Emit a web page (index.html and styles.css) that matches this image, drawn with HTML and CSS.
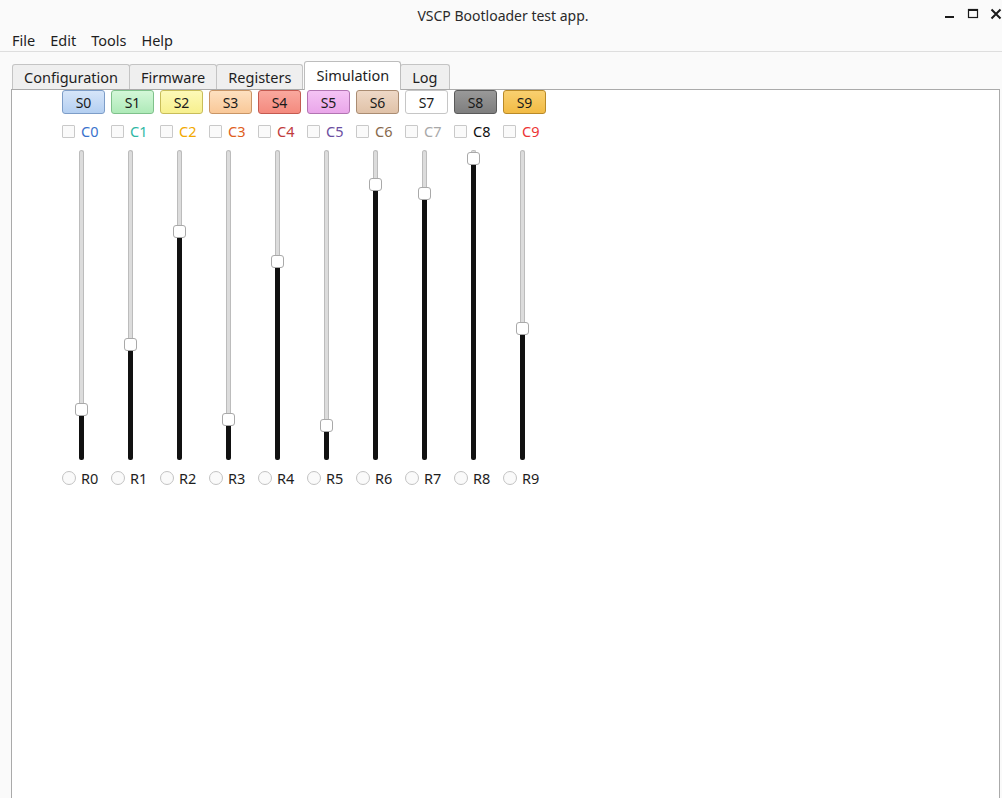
FILE: index.html
```html
<!DOCTYPE html>
<html>
<head>
<meta charset="utf-8">
<link rel="stylesheet" href="styles.css">
</head>
<body>
<div class="titlebar">
  <div class="title">VSCP Bootloader test app.</div>
  <div class="controls">
    <svg class="ctl" width="12" height="12" viewBox="0 0 12 12"><rect x="1" y="8" width="9" height="2" fill="#1a1a1a"/></svg>
    <svg class="ctl" width="12" height="12" viewBox="0 0 12 12"><rect x="1.5" y="1.5" width="9" height="8" fill="none" stroke="#1a1a1a" stroke-width="1.2"/><rect x="1" y="1" width="10" height="2" fill="#1a1a1a"/></svg>
    <svg class="ctl" width="12" height="12" viewBox="0 0 12 12"><path d="M1.5 1.5 L10.5 10.5 M10.5 1.5 L1.5 10.5" stroke="#1a1a1a" stroke-width="2"/></svg>
  </div>
</div>
<div class="menubar">
  <span class="menu">File</span>
  <span class="menu">Edit</span>
  <span class="menu">Tools</span>
  <span class="menu">Help</span>
</div>
<div class="tabs">
  <div class="tab">Configuration</div>
  <div class="tab">Firmware</div>
  <div class="tab">Registers</div>
  <div class="tab active">Simulation</div>
  <div class="tab">Log</div>
</div>
<div class="panel">
  <div class="grid">
    <div class="col">
      <div class="btn s0">S0</div>
      <label class="check"><span class="box"></span><span class="c0">C0</span></label>
      <div class="slider"><div class="rail" style="height:253px"></div><div class="knob"></div><div class="fill" style="height:44px"></div></div>
      <label class="radio"><span class="dot"></span><span>R0</span></label>
    </div>
    <div class="col">
      <div class="btn s1">S1</div>
      <label class="check"><span class="box"></span><span class="c1">C1</span></label>
      <div class="slider"><div class="rail" style="height:188px"></div><div class="knob"></div><div class="fill" style="height:109px"></div></div>
      <label class="radio"><span class="dot"></span><span>R1</span></label>
    </div>
    <div class="col">
      <div class="btn s2">S2</div>
      <label class="check"><span class="box"></span><span class="c2">C2</span></label>
      <div class="slider"><div class="rail" style="height:75px"></div><div class="knob"></div><div class="fill" style="height:222px"></div></div>
      <label class="radio"><span class="dot"></span><span>R2</span></label>
    </div>
    <div class="col">
      <div class="btn s3">S3</div>
      <label class="check"><span class="box"></span><span class="c3">C3</span></label>
      <div class="slider"><div class="rail" style="height:263px"></div><div class="knob"></div><div class="fill" style="height:34px"></div></div>
      <label class="radio"><span class="dot"></span><span>R3</span></label>
    </div>
    <div class="col">
      <div class="btn s4">S4</div>
      <label class="check"><span class="box"></span><span class="c4">C4</span></label>
      <div class="slider"><div class="rail" style="height:105px"></div><div class="knob"></div><div class="fill" style="height:192px"></div></div>
      <label class="radio"><span class="dot"></span><span>R4</span></label>
    </div>
    <div class="col">
      <div class="btn s5">S5</div>
      <label class="check"><span class="box"></span><span class="c5">C5</span></label>
      <div class="slider"><div class="rail" style="height:269px"></div><div class="knob"></div><div class="fill" style="height:28px"></div></div>
      <label class="radio"><span class="dot"></span><span>R5</span></label>
    </div>
    <div class="col">
      <div class="btn s6">S6</div>
      <label class="check"><span class="box"></span><span class="c6">C6</span></label>
      <div class="slider"><div class="rail" style="height:28px"></div><div class="knob"></div><div class="fill" style="height:269px"></div></div>
      <label class="radio"><span class="dot"></span><span>R6</span></label>
    </div>
    <div class="col">
      <div class="btn s7">S7</div>
      <label class="check"><span class="box"></span><span class="c7">C7</span></label>
      <div class="slider"><div class="rail" style="height:37px"></div><div class="knob"></div><div class="fill" style="height:260px"></div></div>
      <label class="radio"><span class="dot"></span><span>R7</span></label>
    </div>
    <div class="col">
      <div class="btn s8">S8</div>
      <label class="check"><span class="box"></span><span class="c8">C8</span></label>
      <div class="slider"><div class="rail" style="height:2px"></div><div class="knob"></div><div class="fill" style="height:295px"></div></div>
      <label class="radio"><span class="dot"></span><span>R8</span></label>
    </div>
    <div class="col">
      <div class="btn s9">S9</div>
      <label class="check"><span class="box"></span><span class="c9">C9</span></label>
      <div class="slider"><div class="rail" style="height:172px"></div><div class="knob"></div><div class="fill" style="height:125px"></div></div>
      <label class="radio"><span class="dot"></span><span>R9</span></label>
    </div>
  </div>
</div>
</body>
</html>
```
FILE: styles.css
```css
html, body {
  margin: 0;
  padding: 0;
  height: 100%;
  overflow: hidden;
}
body {
  background: #fafafa;
  font-family: "Noto Sans", "DejaVu Sans", sans-serif;
  font-size: 14.5px;
  color: #1e1e1e;
  display: flex;
  flex-direction: column;
}
.titlebar {
  height: 30px;
  flex: none;
  display: flex;
  align-items: center;
  justify-content: center;
  position: relative;
}
.title {
  font-size: 14px;
  color: #2a2a2a;
  padding-left: 4px;
}
.controls {
  position: absolute;
  right: 0;
  top: 8px;
  display: flex;
  gap: 11px;
}
.ctl {
  display: block;
}
.menubar {
  height: 21px;
  flex: none;
  display: flex;
  align-items: flex-start;
  gap: 15px;
  padding-left: 12px;
  border-bottom: 1px solid #dedede;
}
.menu {
  line-height: 20px;
}
.tabs {
  display: flex;
  flex: none;
  align-items: flex-end;
  padding-left: 12px;
  margin-top: 9px;
  height: 28px;
  position: relative;
  z-index: 1;
}
.tab {
  height: 24px;
  line-height: 24px;
  padding: 0 11px;
  background: #efefef;
  border: 1px solid #c4c4c4;
  border-bottom: none;
  border-radius: 3px 3px 0 0;
  margin-right: -1px;
  color: #1e1e1e;
}
.tab.active {
  height: 28px;
  line-height: 27px;
  background: #ffffff;
  border-color: #bdbdbd;
  margin-bottom: -1px;
  margin-left: 2px;
  position: relative;
  padding: 0 11px;
}
.panel {
  flex: 1;
  margin-left: 11px;
  margin-right: 2px;
  margin-bottom: -2px;
  border: 1px solid #aaaaaa;
  background: #ffffff;
  box-sizing: border-box;
  padding: 0 0 0 50px;
}
.grid {
  display: flex;
}
.col {
  width: 49px;
  display: flex;
  flex-direction: column;
  align-items: flex-start;
}
.btn {
  width: 43px;
  height: 24px;
  box-sizing: border-box;
  border: 1px solid #888;
  border-radius: 3px;
  display: flex;
  align-items: center;
  justify-content: center;
  color: #1a1a1a;
  font-size: 14px;
}
.s0 { background: linear-gradient(#d6e5f9, #b4cff1); border-color: #7d9dc8; }
.s1 { background: linear-gradient(#d3f7d8, #aeeab8); border-color: #7fc18b; }
.s2 { background: linear-gradient(#fdf9b8, #f7f08e); border-color: #c8bd5a; }
.s3 { background: linear-gradient(#fde0c0, #f9c898); border-color: #c99565; }
.s4 { background: linear-gradient(#f9a89e, #f48a7e); border-color: #c45a50; }
.s5 { background: linear-gradient(#f4c3f4, #e9a6e9); border-color: #b274b2; }
.s6 { background: linear-gradient(#eed8c6, #e0c2a8); border-color: #aa8c72; }
.s7 { background: #ffffff; border-color: #c6c6c6; }
.s8 { background: linear-gradient(#999999, #7e7e7e); border-color: #5a5a5a; }
.s9 { background: linear-gradient(#f9d070, #f2bb44); border-color: #b98a28; }
.check {
  display: flex;
  align-items: center;
  gap: 6px;
  height: 20px;
  margin-top: 7px;
}
.box {
  width: 13px;
  height: 13px;
  box-sizing: border-box;
  border: 1px solid #c9c9c9;
  background: #fafafa;
  border-radius: 1px;
}
.c0 { color: #3a72cc; }
.c1 { color: #2fb7a4; }
.c2 { color: #f2a900; }
.c3 { color: #e0601c; }
.c4 { color: #c13b3b; }
.c5 { color: #6b4da0; }
.c6 { color: #87694c; }
.c7 { color: #a8a8a8; }
.c8 { color: #111111; }
.c9 { color: #ec3434; }
.slider {
  width: 39px;
  display: flex;
  flex-direction: column;
  align-items: center;
  margin-top: 9px;
  height: 310px;
}
.rail {
  width: 5px;
  box-sizing: border-box;
  background: #dcdcdc;
  border: 1px solid #bcbcbc;
  border-bottom: none;
  border-radius: 3px 3px 0 0;
}
.knob {
  width: 13px;
  height: 13px;
  box-sizing: border-box;
  background: #ffffff;
  border: 1px solid #a9a9a9;
  border-radius: 3px;
  flex: none;
}
.fill {
  width: 5px;
  background: #111111;
  border-radius: 0 0 2px 2px;
}
.radio {
  display: flex;
  align-items: center;
  gap: 5px;
  margin-top: 9px;
  height: 18px;
}
.dot {
  width: 14px;
  height: 14px;
  box-sizing: border-box;
  border: 1px solid #c3c3c3;
  border-radius: 50%;
  background: #fafafa;
}
```
